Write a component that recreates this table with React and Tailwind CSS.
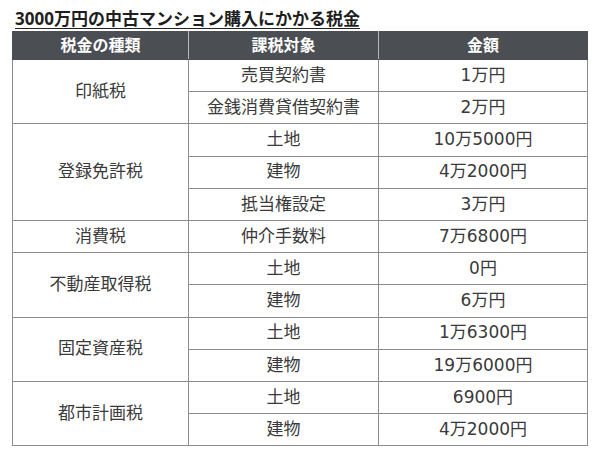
import React from 'react';

const rows = [
  { tax: '印紙税', items: [['売買契約書', '1万円'], ['金銭消費貸借契約書', '2万円']] },
  { tax: '登録免許税', items: [['土地', '10万5000円'], ['建物', '4万2000円'], ['抵当権設定', '3万円']] },
  { tax: '消費税', items: [['仲介手数料', '7万6800円']] },
  { tax: '不動産取得税', items: [['土地', '0円'], ['建物', '6万円']] },
  { tax: '固定資産税', items: [['土地', '1万6300円'], ['建物', '19万6000円']] },
  { tax: '都市計画税', items: [['土地', '6900円'], ['建物', '4万2000円']] },
];

const cell = 'border border-[#8c8c8c] text-center align-middle h-[32.2px] p-0';

export default function App() {
  return (
    <div
      className="w-[600px] h-[450px] bg-white text-[#3a3a3a] overflow-hidden"
      style={{ fontFamily: '"DejaVu Sans", "Noto Sans CJK JP", sans-serif' }}
    >
      <div className="pl-[15px] pt-[8px] h-[31px]">
        <h1
          className="inline-block text-[17px] leading-[19px] font-bold text-[#1f1f1f] border-b-[1.5px] border-[#222222]"
          style={{ fontFamily: '"Noto Sans", "Noto Sans CJK JP", sans-serif' }}
        >
          3000万円の中古マンション購入にかかる税金
        </h1>
      </div>
      <table className="ml-[12px] w-[576px] border-collapse table-fixed text-[17px]">
        <colgroup>
          <col className="w-[176px]" />
          <col className="w-[190px]" />
          <col />
        </colgroup>
        <thead>
          <tr className="bg-[#4b4e53] text-white text-[16px]">
            <th className="h-[28px] p-0 border border-[#4b4e53] border-r-[#b8b8b8] font-bold">税金の種類</th>
            <th className="h-[28px] p-0 border border-[#4b4e53] border-r-[#b8b8b8] font-bold">課税対象</th>
            <th className="h-[28px] p-0 border border-[#4b4e53] font-bold">金額</th>
          </tr>
        </thead>
        <tbody>
          {rows.map((group) =>
            group.items.map(([target, amount], i) => (
              <tr key={group.tax + i}>
                {i === 0 && (
                  <td rowSpan={group.items.length} className={cell}>
                    {group.tax}
                  </td>
                )}
                <td className={cell}>{target}</td>
                <td className={cell}>{amount}</td>
              </tr>
            ))
          )}
        </tbody>
      </table>
    </div>
  );
}
